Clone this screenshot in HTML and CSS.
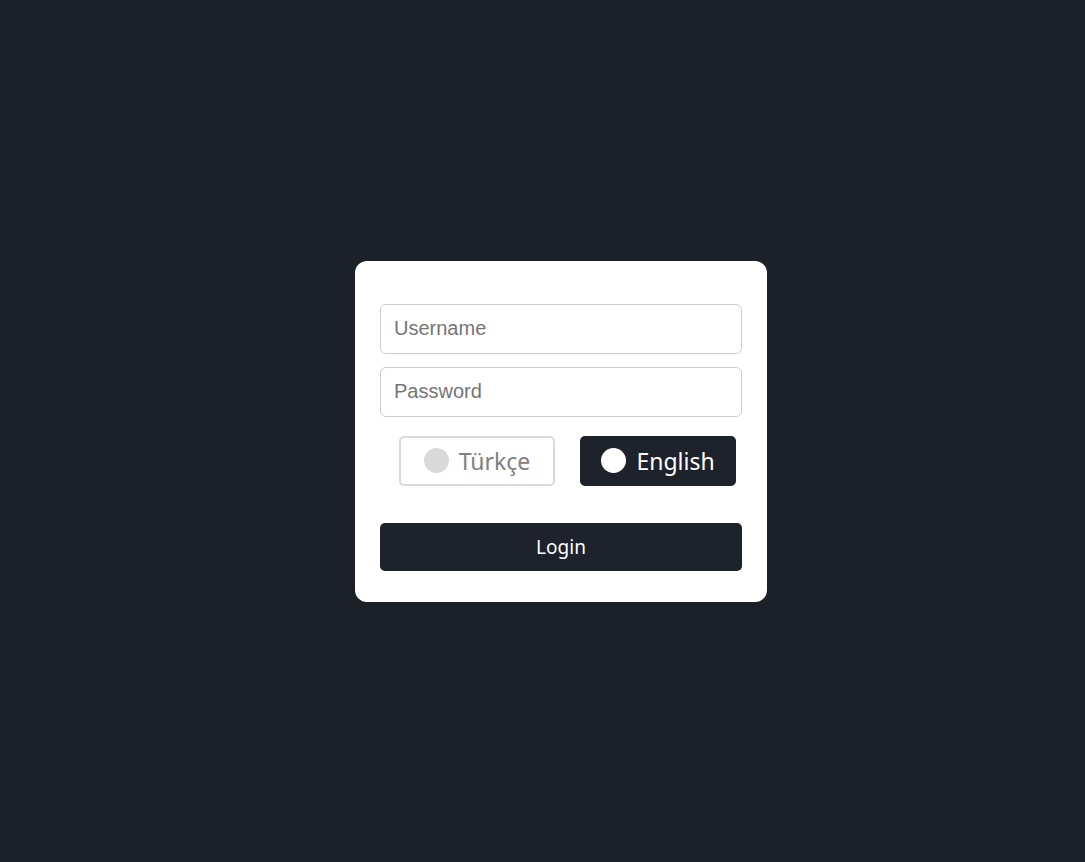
FILE: index.html
```html
<!DOCTYPE html>
<html lang="en">
<head>
<meta charset="utf-8">
<title>Login</title>
<link rel="stylesheet" href="styles.css">
</head>
<body>
  <main class="page">
    <form class="card">
      <input class="field" type="text" placeholder="Username">
      <input class="field" type="password" placeholder="Password">
      <div class="langs">
        <button type="button" class="lang lang-off"><span class="dot"></span><span class="lang-label">Türkçe</span></button>
        <button type="button" class="lang lang-on"><span class="dot"></span><span class="lang-label">English</span></button>
      </div>
      <button type="submit" class="login">Login</button>
    </form>
  </main>
</body>
</html>
```

FILE: styles.css
```css
html, body {
  margin: 0;
  height: 100%;
}
body {
  background: #1c2129;
}
.page {
  box-sizing: border-box;
  height: 100%;
  display: flex;
  align-items: center;
  justify-content: center;
  padding-left: 37px;
}
.card {
  width: 412px;
  box-sizing: border-box;
  background: #ffffff;
  border-radius: 12px;
  padding: 43px 25px 31px;
  display: flex;
  flex-direction: column;
}
.field {
  box-sizing: border-box;
  height: 50px;
  width: 100%;
  border: 1px solid #cccccc;
  border-radius: 6px;
  padding: 0 13px;
  font-family: "Liberation Sans", Arial, sans-serif;
  font-size: 20px;
  color: #333;
  outline: none;
  margin: 0 0 13px;
}
.field::placeholder {
  color: #757575;
}
.langs {
  display: flex;
  gap: 25px;
  padding: 6px 6px 0 19px;
  margin-bottom: 37px;
}
.lang {
  box-sizing: border-box;
  width: 156px;
  height: 50px;
  border-radius: 5px;
  display: flex;
  align-items: center;
  justify-content: center;
  gap: 10px;
  font-family: "Noto Sans", "Open Sans", sans-serif;
  font-size: 23px;
  padding: 0;
  cursor: pointer;
}
.dot {
  width: 25px;
  height: 25px;
  border-radius: 50%;
  flex: none;
}
.lang-off {
  background: #ffffff;
  border: 2px solid #d9d9d9;
  color: #808080;
}
.lang-off .dot {
  background: #d9d9d9;
}
.lang-on {
  background: #1e222b;
  border: 2px solid #1e222b;
  color: #ffffff;
}
.lang-on .dot {
  background: #ffffff;
}
.login {
  height: 48px;
  width: 100%;
  border: none;
  border-radius: 5px;
  background: #1e222b;
  color: #ffffff;
  font-family: "Noto Sans", "Open Sans", sans-serif;
  font-size: 19px;
  cursor: pointer;
}
```
